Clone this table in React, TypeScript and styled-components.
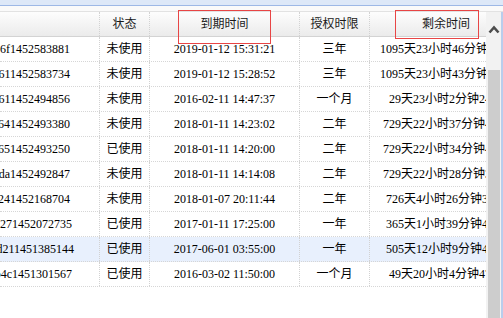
import React from "react";
import styled, { createGlobalStyle } from "styled-components";

const GlobalStyle = createGlobalStyle`
  html, body { margin: 0; padding: 0; background: #ffffff; }
  body { font-family: "Liberation Serif", "Noto Sans CJK SC", serif; }
`;

const COLS = "100px 50px 150px 70px 152px";

const Screen = styled.div`
  position: relative;
  width: 503px;
  height: 318px;
  overflow: hidden;
  display: flex;
  flex-direction: column;
  background: #ffffff;
`;

const TopBand = styled.div`
  height: 5px;
  flex: none;
  background: #dde8f8;
  border-bottom: 1px solid #9db8e6;
`;

const Strip = styled.div`
  height: 5px;
  flex: none;
  background: #fafafa;
  border-bottom: 1px solid #e2e2e2;
`;

const Body = styled.div`
  flex: 1;
  display: flex;
  min-height: 0;
`;

const Viewport = styled.div`
  width: 486px;
  flex: none;
  overflow: hidden;
`;

const Table = styled.div`
  width: 522px;
  display: flex;
  flex-direction: column;
`;

const HeaderRow = styled.div`
  display: grid;
  grid-template-columns: ${COLS};
  height: 24px;
  background: linear-gradient(#fdfdfd, #ebebeb);
  border-bottom: 1px solid #d3d3d3;
`;

const Row = styled.div<{ $selected?: boolean }>`
  display: grid;
  grid-template-columns: ${COLS};
  height: 24px;
  background: ${(p) => (p.$selected ? "#e8f0fd" : "#ffffff")};
  border-bottom: 1px dotted #d6d6d6;
`;

const Cell = styled.div<{ $head?: boolean }>`
  display: flex;
  align-items: center;
  justify-content: center;
  overflow: hidden;
  white-space: nowrap;
  border-right: 1px dotted #d2d2d2;
  font-size: 12px;
  color: ${(p) => (p.$head ? "#1a1a1a" : "#000000")};
  line-height: 14px;
  &:last-child { border-right: none; }
`;

const IdCell = styled(Cell)<{ $pad: number }>`
  justify-content: flex-end;
  padding-right: ${(p) => p.$pad}px;
`;

const Scroll = styled.div`
  width: 15px;
  flex: none;
  display: flex;
  flex-direction: column;
  align-items: center;
  background: #f2f2f2;
  border-right: 2px solid #b9cdec;
`;

const UpButton = styled.div`
  height: 34px;
  width: 15px;
  display: flex;
  align-items: center;
  justify-content: center;
  flex: none;
`;

const Thumb = styled.div`
  margin-top: 24px;
  width: 12px;
  flex: 1;
  background: #cdcdcd;
`;

const Mark = styled.div<{ $x: number; $y: number; $w: number; $h: number }>`
  position: absolute;
  left: ${(p) => p.$x}px;
  top: ${(p) => p.$y}px;
  width: ${(p) => p.$w}px;
  height: ${(p) => p.$h}px;
  border: 1px solid #e84545;
  box-sizing: border-box;
  pointer-events: none;
`;

type Rec = { id: string; pad: number; state: string; date: string; term: string; left: string };

const rows: Rec[] = [
  { id: "c2e8a90b6f1452583881", pad: 29, state: "未使用", date: "2019-01-12 15:31:21", term: "三年", left: "1095天23小时46分钟21秒" },
  { id: "c2e8a90b611452583734", pad: 29, state: "未使用", date: "2019-01-12 15:28:52", term: "三年", left: "1095天23小时43分钟52秒" },
  { id: "c2e8a90b611452494856", pad: 29, state: "未使用", date: "2016-02-11 14:47:37", term: "一个月", left: "29天23小时2分钟24秒" },
  { id: "c2e8a90b641452493380", pad: 29, state: "未使用", date: "2018-01-11 14:23:02", term: "二年", left: "729天22小时37分钟49秒" },
  { id: "c2e8a90b651452493250", pad: 29, state: "已使用", date: "2018-01-11 14:20:00", term: "二年", left: "729天22小时34分钟47秒" },
  { id: "c2e8a90bda1452492847", pad: 29, state: "未使用", date: "2018-01-11 14:14:08", term: "二年", left: "729天22小时28分钟35秒" },
  { id: "c2e8a90b241452168704", pad: 29, state: "未使用", date: "2018-01-07 20:11:44", term: "二年", left: "726天4小时26分钟31秒" },
  { id: "c2e8a92271452072735", pad: 27, state: "已使用", date: "2017-01-11 17:25:00", term: "一年", left: "365天1小时39分钟47秒" },
  { id: "c2e8a9d211451385144", pad: 25, state: "已使用", date: "2017-06-01 03:55:00", term: "一年", left: "505天12小时9分钟47秒" },
  { id: "c2e8a90b4c1451301567", pad: 27, state: "已使用", date: "2016-03-02 11:50:00", term: "一个月", left: "49天20小时4分钟47秒" },
];

export default function App() {
  return (
    <>
      <GlobalStyle />
      <Screen>
        <TopBand />
        <Strip />
        <Body>
          <Viewport>
            <Table>
              <HeaderRow>
                <Cell $head />
                <Cell $head>状态</Cell>
                <Cell $head>到期时间</Cell>
                <Cell $head>授权时限</Cell>
                <Cell $head>剩余时间</Cell>
              </HeaderRow>
              {rows.map((r, i) => (
                <Row key={i} $selected={i === 8}>
                  <IdCell $pad={r.pad}>{r.id}</IdCell>
                  <Cell>{r.state}</Cell>
                  <Cell>{r.date}</Cell>
                  <Cell>{r.term}</Cell>
                  <Cell>{r.left}</Cell>
                </Row>
              ))}
            </Table>
          </Viewport>
          <Scroll>
            <UpButton>
              <svg width="12" height="9" viewBox="0 0 12 9">
                <path d="M1.5 7.5 L6 2.5 L10.5 7.5" fill="none" stroke="#4d4d4d" strokeWidth="2.6" strokeLinejoin="miter" />
              </svg>
            </UpButton>
            <Thumb />
          </Scroll>
        </Body>
        <Mark $x={178} $y={10} $w={93} $h={34} />
        <Mark $x={395} $y={10} $w={84} $h={29} />
      </Screen>
    </>
  );
}
